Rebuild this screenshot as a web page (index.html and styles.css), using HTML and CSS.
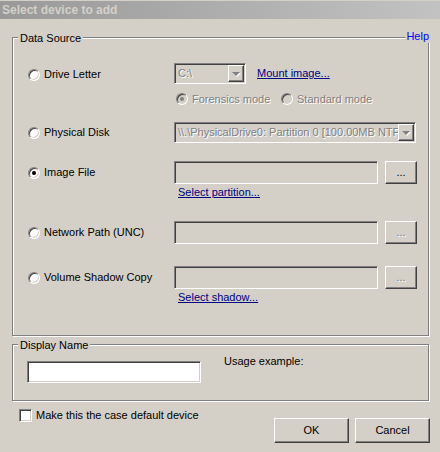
FILE: index.html
```html
<!DOCTYPE html>
<html lang="en">
  <head>
    <meta charset="UTF-8" />
    <title>Select device to add</title>
    <link rel="stylesheet" href="styles.css">
  </head>
  <body>
    <div class="titlebar">Select device to add</div>
    <div class="dialog">
      <!-- Data source group -->
      <div class="group source">
        <span class="group-title">Data Source</span>
        <a class="help" href="#">Help</a>

        <div class="row row-drive">
          <label class="option"><span class="radio"></span>Drive Letter</label>
          <div class="controls">
            <div class="field combo combo-drive disabled">
              <span class="combo-text">C:\</span>
              <span class="raised combo-btn"><span class="arrow"></span></span>
            </div>
            <a class="link mount" href="#">Mount image...</a>
          </div>
        </div>

        <div class="row row-mode">
          <span></span>
          <div class="controls">
            <label class="option mode-forensics disabled"><span class="radio checked"></span>Forensics mode</label>
            <label class="option disabled"><span class="radio"></span>Standard mode</label>
          </div>
        </div>

        <div class="row row-physical">
          <label class="option"><span class="radio"></span>Physical Disk</label>
          <div class="controls">
            <div class="field combo combo-physical disabled">
              <span class="combo-text">\\.\PhysicalDrive0: Partition 0 [100.00MB NTF:</span>
              <span class="raised combo-btn"><span class="arrow"></span></span>
            </div>
          </div>
        </div>

        <div class="row row-image">
          <label class="option"><span class="radio checked"></span>Image File</label>
          <div class="controls">
            <div class="field text-field"></div>
            <button class="raised browse">...</button>
          </div>
          <a class="link sublink" href="#">Select partition...</a>
        </div>

        <div class="row row-network">
          <label class="option"><span class="radio"></span>Network Path (UNC)</label>
          <div class="controls">
            <div class="field text-field"></div>
            <button class="raised browse disabled">...</button>
          </div>
        </div>

        <div class="row row-volume">
          <label class="option"><span class="radio"></span>Volume Shadow Copy</label>
          <div class="controls">
            <div class="field text-field"></div>
            <button class="raised browse disabled">...</button>
          </div>
          <a class="link sublink" href="#">Select shadow...</a>
        </div>
      </div>

      <!-- Display name group -->
      <div class="group display">
        <span class="group-title">Display Name</span>
        <div class="field name-field"></div>
        <span class="usage">Usage example:</span>
      </div>

      <div class="footer">
        <label class="option default-device"><span class="checkbox"></span>Make this the case default device</label>
        <div class="buttons">
          <button class="raised btn">OK</button>
          <button class="raised btn">Cancel</button>
        </div>
      </div>
    </div>
  </body>
</html>
```

FILE: styles.css
```css
* {
  box-sizing: border-box;
}

body {
  margin: 0;
  width: 440px;
  height: 452px;
  overflow: hidden;
  background: #d4d0c8;
  color: #000;
  font: 11px/13px "Liberation Sans", Arial, sans-serif;
}

/* Title bar (inactive window) */
.titlebar {
  margin-top: 1px;
  height: 18px;
  line-height: 18px;
  padding-left: 2px;
  font-size: 12px;
  font-weight: bold;
  color: #d4d0c8;
  background: linear-gradient(to right, #999, #c2c2c2);
}

.dialog {
  padding-left: 12px;
}

/* Etched group boxes */
.group {
  position: relative;
  width: 417px;
  border: 1px solid #808080;
  box-shadow: 1px 1px 0 #fff, inset 1px 1px 0 #fff;
}

.group-title {
  position: absolute;
  top: -6px;
  left: 5px;
  padding: 0 2px;
  background: #d4d0c8;
}

.help {
  position: absolute;
  top: -8px;
  right: -2px;
  padding: 0 1px;
  background: #d4d0c8;
  color: #0000ff;
  text-decoration: none;
}

.source {
  margin-top: 18px;
  height: 299px;
  padding-left: 15px;
}

/* Rows */
.row {
  display: grid;
  grid-template-columns: 146px auto;
  align-items: center;
}

.row-drive { margin-top: 25px; }
.row-mode { margin-top: 7px; height: 16px; }
.row-physical { margin-top: 15px; }
.row-image { margin-top: 18px; }
.row-network { margin-top: 22px; }
.row-volume { margin-top: 22px; }

.row-drive > .option {
  margin-top: 2px;
}

.controls {
  display: flex;
  align-items: center;
}

.option {
  display: flex;
  align-items: center;
  gap: 4px;
  white-space: nowrap;
}

.mode-forensics {
  width: 105px;
  margin-left: 2px;
}

.disabled {
  color: #808080;
  text-shadow: 1px 1px 0 #fff;
}

/* Radio buttons */
.radio {
  position: relative;
  flex: none;
  width: 12px;
  height: 12px;
  border-radius: 50%;
  background: #fff;
  border: 1px solid;
  border-color: #808080 #fff #fff #808080;
  box-shadow: inset 1px 1px 0 #404040, inset -1px -1px 0 #d4d0c8;
}

.radio.checked::after {
  content: "";
  position: absolute;
  left: 3px;
  top: 3px;
  width: 4px;
  height: 4px;
  border-radius: 50%;
  background: #000;
}

.disabled .radio {
  background: #d4d0c8;
}

.disabled .radio.checked::after {
  background: #808080;
}

/* Sunken fields */
.field {
  background: #d4d0c8;
  border: 1px solid;
  border-color: #808080 #fff #fff #808080;
  box-shadow: inset 1px 1px 0 #404040, inset -1px -1px 0 #d4d0c8;
}

.raised {
  background: #d4d0c8;
  border: 1px solid;
  border-color: #fff #404040 #404040 #fff;
  box-shadow: inset -1px -1px 0 #808080;
}

.combo {
  display: flex;
  height: 21px;
  padding: 1px;
}

.combo-drive { width: 72px; }
.combo-physical { width: 242px; }

.combo-text {
  flex: 1;
  overflow: hidden;
  white-space: nowrap;
  padding-left: 2px;
  line-height: 17px;
}

.combo-btn {
  flex: none;
  width: 16px;
  display: flex;
  align-items: center;
  justify-content: center;
}

.arrow {
  width: 0;
  height: 0;
  border-left: 4px solid transparent;
  border-right: 4px solid transparent;
  border-top: 4px solid #808080;
  filter: drop-shadow(1px 1px 0 #fff);
}

.text-field {
  width: 204px;
  height: 23px;
}

.browse {
  width: 32px;
  height: 23px;
  margin-left: 7px;
  padding: 0;
  font: inherit;
  line-height: 13px;
}

button.disabled {
  color: #808080;
}

.link {
  color: #000080;
  text-decoration: underline;
}

.mount {
  margin-left: 11px;
}

.sublink {
  grid-column: 2;
  justify-self: start;
  margin: 2px 0 0 4px;
}

/* Display name */
.display {
  margin-top: 8px;
  height: 57px;
  padding: 10px 0 0 14px;
  display: flex;
  align-items: flex-start;
}

.name-field {
  width: 174px;
  height: 22px;
  margin-top: 6px;
  background: #fff;
}

.usage {
  margin-left: 23px;
}

/* Footer */
.footer {
  width: 418px;
  display: flex;
  justify-content: space-between;
  align-items: flex-start;
  padding-left: 7px;
}

.default-device {
  margin-top: 8px;
}

.checkbox {
  flex: none;
  width: 13px;
  height: 13px;
  background: #fff;
  border: 1px solid;
  border-color: #808080 #fff #fff #808080;
  box-shadow: inset 1px 1px 0 #404040, inset -1px -1px 0 #d4d0c8;
}

.buttons {
  display: flex;
  gap: 6px;
  margin-top: 17px;
}

.btn {
  width: 75px;
  height: 25px;
  padding: 0;
  font: inherit;
  color: #000;
}
```
